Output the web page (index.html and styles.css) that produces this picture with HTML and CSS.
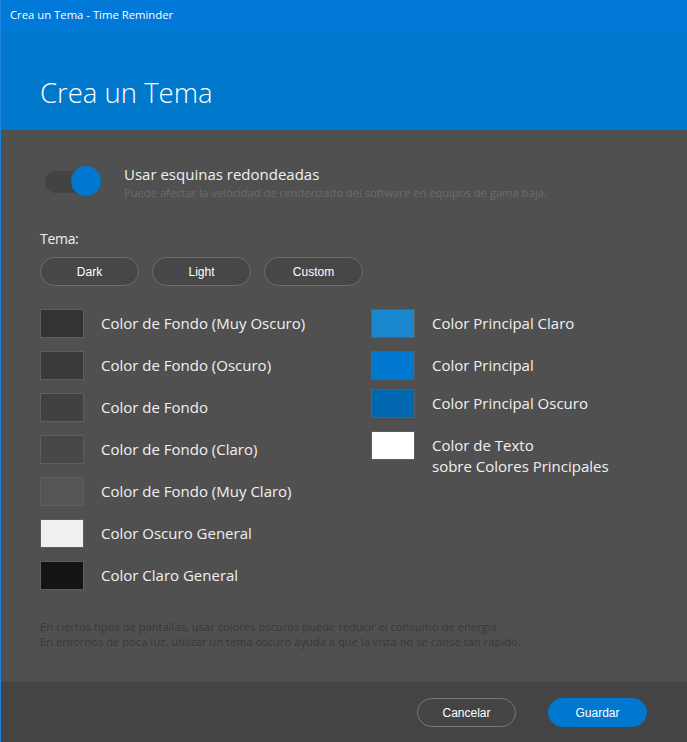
FILE: index.html
```html
<!DOCTYPE html>
<html lang="es">
<head>
<meta charset="utf-8">
<title>Crea un Tema - Time Reminder</title>
<link rel="stylesheet" href="styles.css">
</head>
<body>
<div class="window">
  <div class="titlebar">Crea un Tema - Time Reminder</div>
  <div class="header"><h1 class="title">Crea un Tema</h1></div>
  <div class="content">
    <div class="toggle-row">
      <div class="toggle"><span class="track"></span><span class="thumb"></span></div>
      <div class="toggle-text">
        <div class="toggle-title">Usar esquinas redondeadas</div>
        <div class="toggle-sub">Puede afectar la velocidad de renderizado del software en equipos de gama baja.</div>
      </div>
    </div>
    <div class="tema-label">Tema:</div>
    <div class="theme-buttons">
      <button class="pill">Dark</button>
      <button class="pill">Light</button>
      <button class="pill">Custom</button>
    </div>
    <div class="colors">
      <div class="col">
        <div class="crow"><span class="sw sw-1"></span><span class="lbl">Color de Fondo (Muy Oscuro)</span></div>
        <div class="crow"><span class="sw sw-2"></span><span class="lbl">Color de Fondo (Oscuro)</span></div>
        <div class="crow"><span class="sw sw-3"></span><span class="lbl">Color de Fondo</span></div>
        <div class="crow"><span class="sw sw-4"></span><span class="lbl">Color de Fondo (Claro)</span></div>
        <div class="crow"><span class="sw sw-5"></span><span class="lbl">Color de Fondo (Muy Claro)</span></div>
        <div class="crow"><span class="sw sw-6"></span><span class="lbl">Color Oscuro General</span></div>
        <div class="crow"><span class="sw sw-7"></span><span class="lbl">Color Claro General</span></div>
      </div>
      <div class="col col-right">
        <div class="crow"><span class="sw sw-a"></span><span class="lbl">Color Principal Claro</span></div>
        <div class="crow"><span class="sw sw-b"></span><span class="lbl">Color Principal</span></div>
        <div class="crow tight"><span class="sw sw-c"></span><span class="lbl">Color Principal Oscuro</span></div>
        <div class="crow top"><span class="sw sw-d"></span><span class="lbl">Color de Texto<br>sobre Colores Principales</span></div>
      </div>
    </div>
    <div class="note">En ciertos tipos de pantallas, usar colores oscuros puede reducir el consumo de energia.<br>En entornos de poca luz, utilizar un tema oscuro ayuda a que la vista no se canse tan rapido.</div>
  </div>
  <div class="footer">
    <button class="pill footer-btn">Cancelar</button>
    <button class="pill footer-btn primary">Guardar</button>
  </div>
</div>
</body>
</html>
```

FILE: styles.css
```css
html, body {
  margin: 0;
  padding: 0;
}
body {
  background: #505050;
  font-family: "Open Sans", "Noto Sans", sans-serif;
  color: #f2f2f2;
}
.window {
  width: 687px;
  height: 742px;
  box-sizing: border-box;
  border-left: 1px solid #1a84dc;
  display: flex;
  flex-direction: column;
  overflow: hidden;
}
.titlebar {
  height: 30px;
  flex: none;
  background: #0079d8;
  color: #ffffff;
  font-size: 11.3px;
  line-height: 30px;
  padding-left: 9px;
}
.header {
  height: 100px;
  flex: none;
  background: #0078cc;
  padding-left: 39px;
  box-sizing: border-box;
  display: flex;
  align-items: flex-start;
}
.title {
  margin: 0;
  padding-top: 45px;
  font-size: 27.5px;
  font-weight: 300;
  line-height: 36px;
  color: #ffffff;
}
.content {
  flex: 1;
  background: #505050;
  padding: 36px 0 0 39px;
  display: flex;
  flex-direction: column;
}
.toggle-row {
  display: flex;
  align-items: flex-start;
  padding-left: 5px;
}
.toggle {
  position: relative;
  width: 56px;
  height: 30px;
  flex: none;
}
.track {
  position: absolute;
  left: 0;
  top: 5px;
  width: 46px;
  height: 22px;
  border-radius: 11px;
  background: #434343;
}
.thumb {
  position: absolute;
  left: 26px;
  top: 0;
  width: 30px;
  height: 30px;
  border-radius: 50%;
  background: #0078cf;
}
.toggle-text {
  margin-left: 23px;
  margin-top: -3px;
}
.toggle-title {
  font-size: 15px;
  line-height: 22px;
  color: #f0f0f0;
}
.toggle-sub {
  font-size: 11.2px;
  line-height: 14px;
  color: #6c6c6c;
  margin-top: 1px;
}
.tema-label {
  margin-top: 30px;
  font-size: 14px;
  line-height: 18px;
  color: #f0f0f0;
  letter-spacing: -0.3px;
}
.theme-buttons {
  display: flex;
  gap: 13px;
  margin-top: 9px;
}
.pill {
  width: 99px;
  height: 29px;
  border-radius: 15px;
  border: 1px solid #6e6e6e;
  background: #474747;
  color: #ffffff;
  font-family: "Liberation Sans", Arial, sans-serif;
  font-size: 12px;
  padding: 1px 0 0;
  box-sizing: border-box;
}
.colors {
  display: flex;
  margin-top: 23px;
}
.col {
  width: 331px;
  flex: none;
  display: flex;
  flex-direction: column;
}
.col-right {
  flex: 1;
  width: auto;
}
.crow {
  display: flex;
  align-items: center;
  height: 29px;
  margin-bottom: 13px;
}
.crow.tight {
  margin-top: -4px;
}
.crow.top {
  align-items: flex-start;
}
.sw {
  width: 44px;
  height: 29px;
  box-sizing: border-box;
  border: 1px solid #5e5e5e;
  flex: none;
}
.lbl {
  margin-left: 17px;
  font-size: 15px;
  line-height: 21px;
  color: #f0f0f0;
  white-space: nowrap;
}
.crow.top .lbl {
  margin-top: 4px;
}
.sw-1 { background: #333333; }
.sw-2 { background: #3a3a3a; }
.sw-3 { background: #414141; }
.sw-4 { background: #474747; }
.sw-5 { background: #555555; }
.sw-6 { background: #f0f0f0; }
.sw-7 { background: #141414; }
.sw-a { background: #1a86d0; }
.sw-b { background: #0078cf; }
.sw-c { background: #0067b0; }
.sw-d { background: #ffffff; }
.note {
  margin-top: 16px;
  font-size: 11.2px;
  line-height: 15px;
  color: #383838;
}
.footer {
  height: 60px;
  flex: none;
  background: #444444;
  display: flex;
  justify-content: flex-end;
  align-items: center;
  gap: 32px;
  padding-right: 40px;
}
.footer-btn {
  background: #444444;
  border-color: #777777;
}
.footer-btn.primary {
  background: #0078cf;
  border-color: #0078cf;
}
```
